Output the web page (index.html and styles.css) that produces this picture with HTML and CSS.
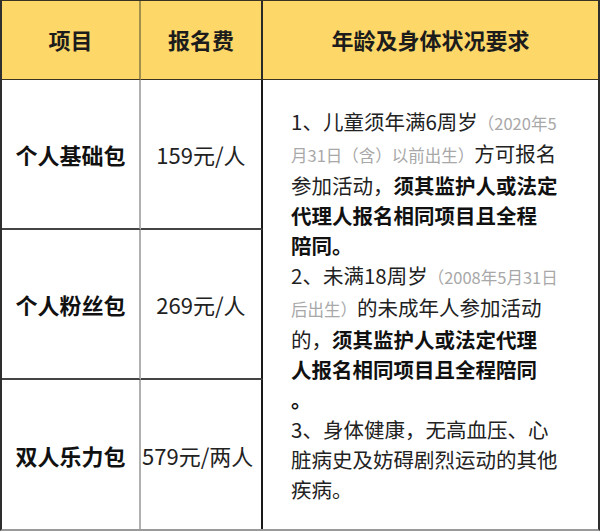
FILE: index.html
```html
<!DOCTYPE html>
<html lang="zh-CN">
<head>
<meta charset="utf-8">
<link rel="stylesheet" href="styles.css">
</head>
<body>
<div class="table">
  <div class="cell head c1">项目</div>
  <div class="cell head c2">报名费</div>
  <div class="cell head c3">年龄及身体状况要求</div>

  <div class="cell name r1">个人基础包</div>
  <div class="cell price r1">159元/人</div>

  <div class="cell req">
    <div class="lines">
      <div class="ln">1、儿童须年满6周岁<span class="note">（2020年5</span></div>
      <div class="ln"><span class="note">月31日（含）以前出生）</span>方可报名</div>
      <div class="ln">参加活动，<b>须其监护人或法定</b></div>
      <div class="ln"><b>代理人报名相同项目且全程</b></div>
      <div class="ln"><b>陪同。</b></div>
      <div class="ln">2、未满18周岁<span class="note">（2008年5月31日</span></div>
      <div class="ln"><span class="note">后出生）</span>的未成年人参加活动</div>
      <div class="ln">的，<b>须其监护人或法定代理</b></div>
      <div class="ln"><b>人报名相同项目且全程陪同</b></div>
      <div class="ln"><b>。</b></div>
      <div class="ln">3、身体健康，无高血压、心</div>
      <div class="ln">脏病史及妨碍剧烈运动的其他</div>
      <div class="ln">疾病。</div>
    </div>
  </div>

  <div class="cell name r2">个人粉丝包</div>
  <div class="cell price r2">269元/人</div>

  <div class="cell name r3">双人乐力包</div>
  <div class="cell price r3">579元/两人</div>
</div>
</body>
</html>
```

FILE: styles.css
```css
html, body {
  margin: 0;
  padding: 0;
  background: #ffffff;
}

body {
  font-family: "Noto Sans CJK SC", "Noto Sans", sans-serif;
  color: #222222;
}

.table {
  box-sizing: border-box;
  width: 600px;
  height: 531px;
  display: grid;
  grid-template-columns: 139px 122px 1fr;
  grid-template-rows: 79px 150px 150px 1fr;
  border-top: 1px solid #3a3222;
  border-left: 2px solid #2e2e2e;
  border-right: 2px solid #2e2e2e;
  border-bottom: 2px solid #9a9a9a;
}

.cell {
  box-sizing: border-box;
  display: flex;
  align-items: center;
  justify-content: center;
  white-space: nowrap;
}

.head {
  background: #fdd768;
  font-size: 22px;
  font-weight: 700;
  color: #1c1c1c;
  border-bottom: 1px solid #3a3222;
  padding-bottom: 3px;
}

.head.c1 {
  grid-column: 1;
  border-right: 2px solid #a38f4c;
}

.head.c2 {
  grid-column: 2;
  border-right: 2px solid #2a2a2a;
}

.head.c3 {
  grid-column: 3;
}

.name {
  grid-column: 1;
  font-size: 22px;
  font-weight: 700;
  color: #111111;
  border-right: 2px solid #b0b0b0;
}

.price {
  grid-column: 2;
  font-size: 22px;
  color: #222222;
  border-right: 2px solid #1a1a1a;
}

.r1 { grid-row: 2; border-bottom: 2px solid #444444; }
.r2 { grid-row: 3; border-bottom: 2px solid #444444; }
.r3 { grid-row: 4; }

.price.r3 {
  justify-content: flex-start;
  padding-left: 1px;
}

.req {
  grid-column: 3;
  grid-row: 2 / 5;
  justify-content: flex-start;
  padding-left: 28px;
}

.lines {
  font-size: 20.5px;
  line-height: 30px;
  color: #222222;
}

.ln b {
  font-weight: 700;
  color: #111111;
}

.note {
  font-size: 16.5px;
  color: #a8a8a8;
}
```
